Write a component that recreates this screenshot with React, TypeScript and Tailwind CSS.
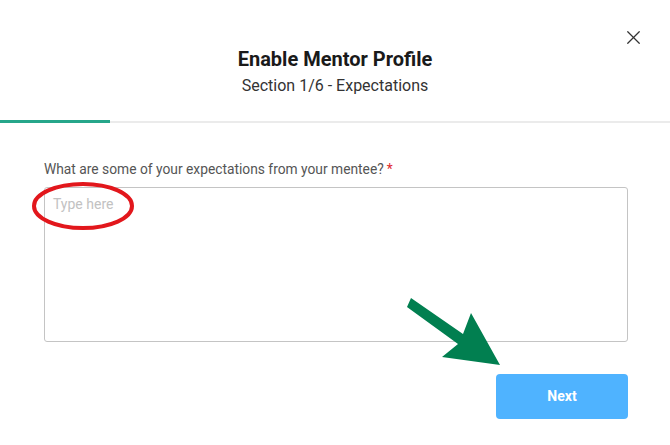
import { X } from 'lucide-react';

export default function App() {
  return (
    <div className="relative w-[670px] h-[445px] bg-white overflow-hidden font-['Roboto','Liberation_Sans',sans-serif]">
      {/* Close */}
      <button className="absolute left-[622px] top-[26px] text-[#333]">
        <X className="w-[23px] h-[23px]" strokeWidth={1.3} />
      </button>

      {/* Header */}
      <header className="pt-[45px] text-center">
        <h1 className="text-[20px] leading-[28px] font-bold text-[#1a1a1a]">Enable Mentor Profile</h1>
        <p className="text-[16px] leading-[26px] text-[#333]">Section 1/6 - Expectations</p>
      </header>

      {/* Progress */}
      <div className="mt-[20px] flex items-end h-[4px]">
        <div className="w-[110px] h-[3px] bg-[#26a68a]" />
        <div className="flex-1 h-[2px] bg-[#ebebeb]" />
      </div>

      {/* Form */}
      <main className="pl-[44px] pr-[42px] pt-[36px]">
        <label className="block text-[13.8px] leading-[20px] text-[#555]">
          What are some of your expectations from your mentee?
          <span className="ml-[3px] text-[#e0282e]">*</span>
        </label>
        <textarea
          placeholder="Type here"
          className="mt-[8px] block w-full h-[155px] resize-none rounded-[3px] border border-[#c4c4c4] px-[8px] pt-[6px] pb-[8px] text-[14px] leading-[20px] text-[#333] placeholder:text-[#c2c2c2] outline-none"
        />
        <div className="mt-[32px] flex justify-end">
          <button className="w-[132px] h-[45px] rounded-[4px] bg-[#4fb3ff] text-white text-[14px] font-bold">
            Next
          </button>
        </div>
      </main>

      {/* Annotations */}
      <svg className="absolute left-[30px] top-[180px]" width="106" height="54" viewBox="0 0 106 54">
        <ellipse cx="53" cy="26" rx="49" ry="22" fill="none" stroke="#e2171c" strokeWidth="4" />
      </svg>
      <svg className="absolute left-[400px] top-[290px]" width="110" height="80" viewBox="0 0 110 80">
        <polygon points="11,8 7,17 58,54 42,67 100,75 71,23 63,44" fill="#017f50" />
      </svg>
    </div>
  );
}
